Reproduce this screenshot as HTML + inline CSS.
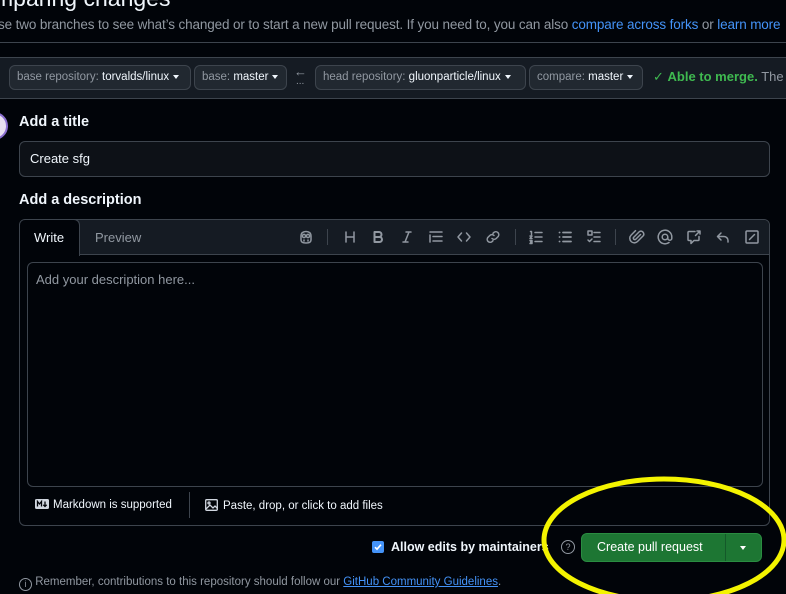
<!DOCTYPE html>
<html><head><style>
*{box-sizing:border-box;margin:0;padding:0}
body{width:786px;height:594px;background:#010409;color:#f0f6fc;font-family:"Liberation Sans",sans-serif;position:relative;overflow:hidden}
.a{position:absolute;white-space:nowrap}
.btn{position:absolute;top:65px;height:25px;border:1px solid #3d444d;border-radius:6px;background:#212830;font-size:11.5px;color:#9198a1;line-height:23px;padding-left:7px}
.btn b{color:#f0f6fc;font-weight:normal}
.caret{display:inline-block;border-left:3.5px solid transparent;border-right:3.5px solid transparent;border-top:4px solid #f0f6fc;vertical-align:middle;margin-left:4px}
svg.i{position:absolute;top:229px;width:16px;height:16px;fill:none;stroke:#9198a1;stroke-width:1.5;stroke-linecap:round;stroke-linejoin:round}
</style></head><body>
<div class="a" style="left:-6px;top:-15px;font-size:23px;color:#f0f6fc">mparing changes</div>
<div class="a" style="left:-2px;top:17px;font-size:13.5px;letter-spacing:-0.13px;color:#9198a1">se two branches to see what’s changed or to start a new pull request. If you need to, you can also <span style="color:#4493f8">compare across forks</span> or <span style="color:#4493f8">learn more</span></div>
<div class="a" style="left:0;top:42px;width:786px;height:1px;background:#3d444d"></div>
<div class="a" style="left:0;top:57px;width:786px;height:42px;background:#151b23;border-top:1px solid #3d444d;border-bottom:1px solid #3d444d"></div>
<div class="btn" style="left:9px;width:182px">base repository: <b>torvalds/linux</b><span class="caret"></span></div>
<div class="btn" style="left:194px;width:93px">base: <b>master</b><span class="caret"></span></div>
<div class="a" style="left:294px;top:64px;font-size:13px;color:#9198a1">←</div>
<div class="a" style="left:296px;top:76px;font-size:10px;color:#9198a1">...</div>
<div class="btn" style="left:315px;width:211px">head repository: <b>gluonparticle/linux</b><span class="caret"></span></div>
<div class="btn" style="left:529px;width:114px">compare: <b>master</b><span class="caret"></span></div>
<div class="a" style="left:653px;top:69px;font-size:13px;color:#3fb950">✓ <b>Able to merge.</b> <span style="color:#9198a1">The</span></div>
<div class="a" style="left:-20px;top:112px;width:28px;height:28px;border-radius:50%;background:#e8e0f0;border:2px solid #8b6fd0"></div>
<div class="a" style="left:19px;top:114px;font-size:14.5px;font-weight:bold">Add a title</div>
<div class="a" style="left:19px;top:141px;width:751px;height:36px;border:1px solid #3d444d;border-radius:6px;background:#0d1117;font-size:13px;padding:9px 10px">Create sfg</div>
<div class="a" style="left:19px;top:192px;font-size:14.5px;font-weight:bold">Add a description</div>
<div class="a" style="left:19px;top:219px;width:751px;height:307px;border:1px solid #3d444d;border-radius:6px;background:#010409;overflow:hidden">
 <div class="a" style="left:0;top:0;width:751px;height:35px;background:#151b23;border-bottom:1px solid #3d444d"></div>
 <div class="a" style="left:-1px;top:-1px;width:61px;height:37px;background:#010409;border:1px solid #3d444d;border-bottom:none;border-radius:6px 6px 0 0;font-size:13px;padding:10px 0 0 14px">Write</div>
 <div class="a" style="left:75px;top:10px;font-size:13px;color:#9198a1">Preview</div>
 <div class="a" style="left:7px;top:42px;width:736px;height:225px;border:1px solid #3d444d;border-radius:6px;background:#010409;font-size:13px;color:#9198a1;padding:9px 8px">Add your description here...</div>
 <div class="a" style="left:15px;top:279px;font-size:11.5px;color:#f0f6fc"><svg width="14" height="10" style="vertical-align:-1px;margin-right:4px"><rect x="0" y="0" width="14" height="10" rx="1.5" fill="#d1d7e0"/><path d="M2.5 7.5V2.5l2 2.5 2-2.5v5M10 2.5v5M8.3 5.8L10 7.5l1.7-1.7" stroke="#010409" stroke-width="1.3" fill="none"/></svg>Markdown is supported</div>
 <div class="a" style="left:169px;top:272px;width:1px;height:26px;background:#3d444d"></div>
 <div class="a" style="left:185px;top:279px;font-size:11.5px;color:#f0f6fc"><svg width="13" height="12" style="vertical-align:-2px;margin-right:5px" fill="none" stroke="#d1d7e0" stroke-width="1.3"><rect x="0.7" y="0.7" width="11.6" height="10.6" rx="1"/><path d="M1 10l4-4 3 3 2-2 2.5 2.5"/><circle cx="4" cy="4" r="1"/></svg>Paste, drop, or click to add files</div>
</div>
<svg class="i" style="left:298px" viewBox="0 0 16 16"><path d="M3 7c0-3 2-4.5 5-4.5S13 4 13 7v4c0 2-2 3-5 3s-5-1-5-3z"/><circle cx="6" cy="7" r="1.6"/><circle cx="10" cy="7" r="1.6"/><path d="M6 11v1M10 11v1"/></svg>
<div class="a" style="left:327px;top:229px;width:1px;height:16px;background:#3d444d"></div>
<svg class="i" style="left:342px" viewBox="0 0 16 16"><path d="M4 3v10M12 3v10M4 8h8"/></svg>
<svg class="i" style="left:370px" viewBox="0 0 16 16"><path d="M4.5 3h4.5a2.5 2.5 0 010 5H4.5zM4.5 8h5a2.5 2.5 0 010 5h-5z" stroke-width="2"/></svg>
<svg class="i" style="left:399px" viewBox="0 0 16 16"><path d="M7 3h5M4 13h5M10 3L6 13"/></svg>
<svg class="i" style="left:428px" viewBox="0 0 16 16"><path d="M2 3h12M5 7.5h9M5 12h9M2 6v7"/></svg>
<svg class="i" style="left:456px" viewBox="0 0 16 16"><path d="M5.5 4L2 8l3.5 4M10.5 4L14 8l-3.5 4"/></svg>
<svg class="i" style="left:485px" viewBox="0 0 16 16"><path d="M7 9.5a3 3 0 004.2 0l2-2a3 3 0 00-4.2-4.2l-1 1M9 6.5a3 3 0 00-4.2 0l-2 2a3 3 0 004.2 4.2l1-1"/></svg>
<div class="a" style="left:515px;top:229px;width:1px;height:16px;background:#3d444d"></div>
<svg class="i" style="left:528px" viewBox="0 0 16 16"><path d="M7 3.5h7M7 8h7M7 12.5h7M2.5 2.5h1v3M2 7h2l-2 2.5h2M2 11.5h2v3H2M2.5 13h1.5"/></svg>
<svg class="i" style="left:557px" viewBox="0 0 16 16"><path d="M6 3.5h8M6 8h8M6 12.5h8M2.5 3.5h.1M2.5 8h.1M2.5 12.5h.1" stroke-width="1.8"/></svg>
<svg class="i" style="left:586px" viewBox="0 0 16 16"><rect x="2" y="2" width="4" height="4"/><path d="M8 3.5h6M8 8h6M8 12.5h6M2 11l1.5 1.5L6 10"/></svg>
<div class="a" style="left:615px;top:229px;width:1px;height:16px;background:#3d444d"></div>
<svg class="i" style="left:629px" viewBox="0 0 16 16"><path d="M11.5 5.5l-5 5a1.5 1.5 0 01-2-2l6-6a3 3 0 014 4l-6 6a4.5 4.5 0 01-6.4-6.4l4.4-4.4"/></svg>
<svg class="i" style="left:657px" viewBox="0 0 16 16"><circle cx="8" cy="8" r="2.8"/><path d="M10.8 8v1.2a2 2 0 004 0V8a6.8 6.8 0 10-2.8 5.5"/></svg>
<svg class="i" style="left:686px" viewBox="0 0 16 16"><path d="M9 2.5H3a1 1 0 00-1 1v7a1 1 0 001 1h2v3l3-3h4a1 1 0 001-1v-3M11 2h3v3M14 2l-4.5 4.5"/></svg>
<svg class="i" style="left:715px" viewBox="0 0 16 16"><path d="M6 4L2.5 7.5 6 11M3 7.5h6a4 4 0 014 4V13"/></svg>
<svg class="i" style="left:744px" viewBox="0 0 16 16"><rect x="2" y="2" width="12" height="12" rx="1"/><path d="M5.5 10.5l5-5"/></svg>
<svg class="a" style="left:372px;top:541px" width="12" height="12"><rect width="12" height="12" rx="2" fill="#4493f8"/><path d="M3 6.2l2 2 4-4.5" stroke="#fff" stroke-width="1.6" fill="none"/></svg>
<div class="a" style="left:391px;top:540px;font-size:12.5px;font-weight:bold">Allow edits by maintainers</div>
<div class="a" style="left:561px;top:540px;width:14px;height:14px;border:1.2px solid #9198a1;border-radius:50%;font-size:9px;color:#9198a1;text-align:center;line-height:12px">?</div>
<div class="a" style="left:581px;top:533px;width:181px;height:29px;background:#1d7633;border:1px solid #2a8c41;border-radius:6px"></div>
<div class="a" style="left:597px;top:540px;font-size:12.5px;color:#fff">Create pull request</div>
<div class="a" style="left:725px;top:534px;width:1px;height:27px;background:#14592a"></div>
<div class="a" style="left:740px;top:546px;border-left:3.5px solid transparent;border-right:3.5px solid transparent;border-top:4px solid #fff"></div>
<div class="a" style="left:19px;top:576px;font-size:11.5px;color:#9198a1"><span style="display:inline-block;width:13px;height:13px;border:1.2px solid #9198a1;border-radius:50%;font-size:9px;text-align:center;line-height:11px;vertical-align:-2px">i</span> Remember, contributions to this repository should follow our <span style="color:#4493f8;text-decoration:underline">GitHub Community Guidelines</span>.</div>
<svg class="a" style="left:0;top:0" width="786" height="594"><ellipse cx="664" cy="540" rx="120" ry="61" fill="none" stroke="#f4f400" stroke-width="5"/></svg>
</body></html>
